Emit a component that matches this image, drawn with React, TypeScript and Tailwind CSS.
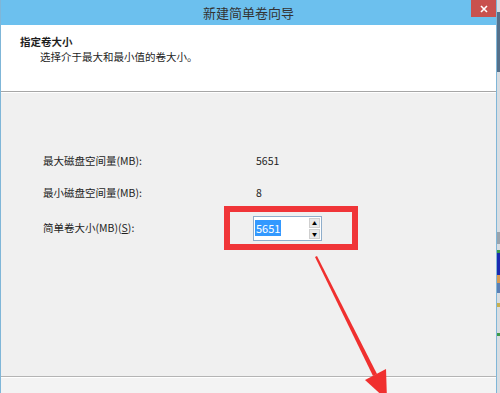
const font = { fontFamily: '"Noto Sans CJK SC", "Microsoft YaHei", sans-serif' };

function SpinBox() {
  return (
    <div className="flex h-[25px] w-[69px] border border-[#8faecb] bg-white">
      <div className="flex flex-1 items-center pl-[1px]">
        <span className="bg-[#3399ff] px-[1px] text-[11px] leading-[16px] text-white">5651</span>
      </div>
      <div className="flex w-[13px] flex-col gap-[1px] p-[1px]">
        <div className="flex flex-1 items-center justify-center border border-[#cfcfcf] bg-[#e8e8e8] text-[5px] leading-none text-black">▲</div>
        <div className="flex flex-1 items-center justify-center border border-[#cfcfcf] bg-[#e8e8e8] text-[5px] leading-none text-black">▼</div>
      </div>
    </div>
  );
}

function CloseButton() {
  return (
    <div className="flex h-[17px] w-[25px] shrink-0 items-center justify-center bg-[#c9514e]">
      <svg width="8" height="8" viewBox="0 0 8 8">
        <path d="M1 1 L7 7 M7 1 L1 7" stroke="#ffffff" strokeWidth="1.6" />
      </svg>
    </div>
  );
}

export default function App() {
  return (
    <div className="flex h-[393px] w-[500px] overflow-hidden bg-[#f0f0f0] text-[#1e1e1e]" style={font}>
      <div className="relative flex w-[497px] flex-col border-l border-r border-[#7fb6d8]">
        {/* title bar */}
        <div className="flex h-[25px] shrink-0 items-start bg-[#6cc0ee]">
          <div className="w-[25px] shrink-0" />
          <div className="flex h-[25px] flex-1 items-center justify-center">
            <span className="text-[13px] leading-none text-[#333]">新建简单卷向导</span>
          </div>
          <CloseButton />
        </div>

        {/* header */}
        <div className="flex h-[67px] shrink-0 flex-col border-b border-[#a6a6a6] bg-white pl-[19px] pt-[10px]">
          <div className="text-[10.5px] font-bold leading-[14px]">指定卷大小</div>
          <div className="pl-[20px] pt-[1px] text-[10.5px] leading-[14px]">选择介于最大和最小值的卷大小。</div>
        </div>

        {/* body */}
        <div className="flex flex-1 flex-col border-t border-white pl-[42px] pt-[60px] text-[10.5px]">
          <div className="flex h-[16px] items-center">
            <span className="w-[213px]">最大磁盘空间量(MB):</span>
            <span>5651</span>
          </div>
          <div className="mt-[16px] flex h-[16px] items-center">
            <span className="w-[213px]">最小磁盘空间量(MB):</span>
            <span>8</span>
          </div>
          <div className="mt-[5px] flex items-center">
            <span className="w-[181px]">
              简单卷大小(MB)(<span className="underline">S</span>):
            </span>
            <div className="flex h-[44px] w-[134px] items-center border-[6px] border-[#f03538] pl-[23px]">
              <SpinBox />
            </div>
          </div>
        </div>

        {/* footer */}
        <div className="h-[17px] shrink-0 border-t border-[#b4b4b4] bg-[#f3f3f3] shadow-[inset_0_1px_0_#ffffff]" />

        {/* annotation arrow */}
        <svg className="pointer-events-none absolute inset-0" width="497" height="393" viewBox="0 0 497 393">
          <polygon points="314,257 316,256 376,374 372,376" fill="#f0302f" />
          <polygon points="364,380 385,369 386,400" fill="#f0302f" />
        </svg>
      </div>

      {/* neighbouring window edge */}
      <div className="flex w-[3px] flex-col bg-[#d8dde2]">
        <div className="h-[12px]" />
        <div className="h-[60px] bg-[#55708a]" />
        <div className="h-[160px]" />
        <div className="h-[12px] bg-[#9aa4ad]" />
        <div className="h-[6px]" />
        <div className="h-[3px] bg-[#3d9a4a]" />
        <div className="h-[22px] bg-[#1a2ab0]" />
        <div className="h-[8px] bg-[#d89a52]" />
        <div className="h-[10px] bg-[#5a7fb5]" />
        <div className="h-[10px]" />
        <div className="h-[4px] bg-[#c8b050]" />
        <div className="h-[26px]" />
        <div className="h-[3px] bg-[#3d9a4a]" />
      </div>
    </div>
  );
}
